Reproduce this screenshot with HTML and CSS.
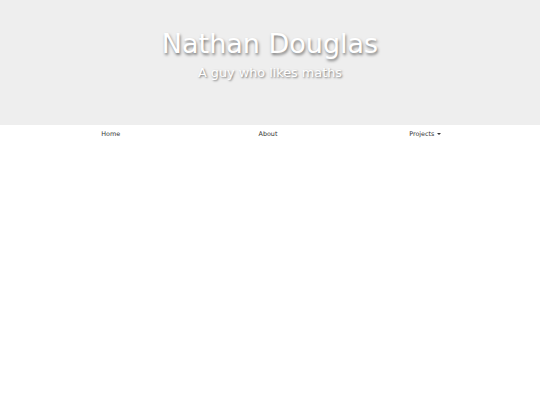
FILE: index.html
```html
<!DOCTYPE html>
<html>
<head>
<meta charset="utf-8">
<link rel="stylesheet" href="styles.css">
</head>
<body>
<header class="hero">
  <h1 class="title">Nathan Douglas</h1>
  <p class="subtitle">A guy who likes maths</p>
</header>
<nav class="nav">
  <ul class="nav-list">
    <li class="nav-item"><a href="#">Home</a></li>
    <li class="nav-item"><a href="#">About</a></li>
    <li class="nav-item"><a href="#">Projects <span class="caret"></span></a></li>
  </ul>
</nav>
</body>
</html>
```
FILE: styles.css
```css
html, body {
  margin: 0;
  padding: 0;
  background: #fff;
  font-family: "DejaVu Sans", "Noto Sans", sans-serif;
}
.hero {
  background: #eeeeee;
  height: 125px;
  box-sizing: border-box;
  padding-top: 27px;
  text-align: center;
}
.title {
  margin: 0;
  font-size: 27px;
  line-height: 34px;
  color: #fff;
  text-shadow: 1px 2px 3px rgba(0,0,0,0.5);
  font-family: "DejaVu Sans", sans-serif;
  font-weight: normal;
}
.subtitle {
  margin: 3px 0 0;
  font-size: 12.8px;
  line-height: 18px;
  color: #fff;
  text-shadow: 1px 1px 2px rgba(0,0,0,0.5);
}
.nav {
  padding-left: 32px;
}
.nav-list {
  list-style: none;
  margin: 0;
  padding: 0;
  width: 472px;
  display: grid;
  grid-template-columns: 1fr 1fr 1fr;
}
.nav-item {
  text-align: center;
  padding: 5px 0 4px;
  font-size: 6.4px;
  line-height: 9px;
}
.nav-item a {
  color: #333;
  text-decoration: none;
}
.caret {
  display: inline-block;
  width: 0;
  height: 0;
  border-left: 2px solid transparent;
  border-right: 2px solid transparent;
  border-top: 2px solid #333;
  vertical-align: middle;
  margin-left: 1px;
}
```
